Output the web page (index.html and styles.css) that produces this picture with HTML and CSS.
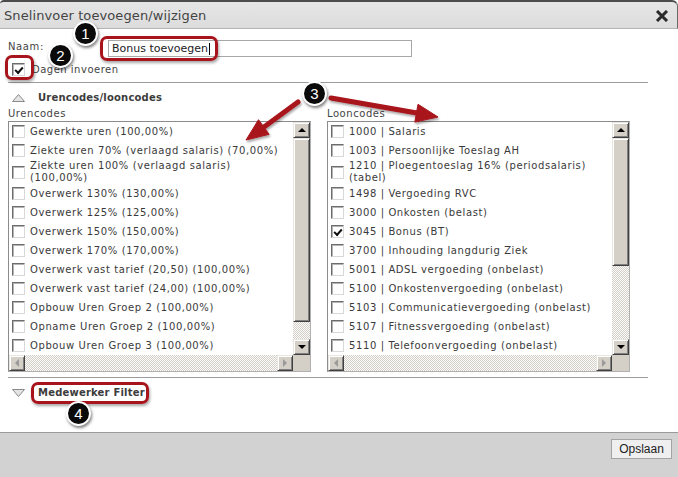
FILE: index.html
```html
<!DOCTYPE html>
<html lang="nl">
<head>
<meta charset="utf-8">
<title>Snelinvoer toevoegen/wijzigen</title>
<link rel="stylesheet" href="styles.css">
</head>
<body>
<div class="window">
  <div class="titlebar">
    <span class="title">Snelinvoer toevoegen/wijzigen</span>
    <svg class="close" width="14" height="12" viewBox="0 0 14 12"><path d="M2 1 L12 11 M12 1 L2 11" stroke="#2a2a2a" stroke-width="3"/></svg>
  </div>

  <div class="content">
    <div class="name-row">
      <label class="name-label">Naam:</label>
      <div class="name-input">Bonus toevoegen<span class="caret"></span></div>
    </div>
    <div class="check-row">
      <span class="cb checked"></span>
      <span class="check-label">Dagen invoeren</span>
    </div>
    <div class="rule"></div>

    <div class="section-head">
      <svg class="tri" width="13" height="8" viewBox="0 0 13 8"><polygon points="6.5,0.5 12.5,7.5 0.5,7.5" fill="#e4e4e4" stroke="#8a8a8a"/></svg>
      <span>Urencodes/looncodes</span>
    </div>

    <div class="columns">
      <div class="column">
        <div class="col-label">Urencodes</div>
        <div class="listbox">
          <div class="listbox-main">
            <ul class="items">
              <li><span class="cb"></span><span class="txt">Gewerkte uren (100,00%)</span></li>
              <li><span class="cb"></span><span class="txt">Ziekte uren 70% (verlaagd salaris) (70,00%)</span></li>
              <li><span class="cb"></span><span class="txt">Ziekte uren 100% (verlaagd salaris)<br>(100,00%)</span></li>
              <li><span class="cb"></span><span class="txt">Overwerk 130% (130,00%)</span></li>
              <li><span class="cb"></span><span class="txt">Overwerk 125% (125,00%)</span></li>
              <li><span class="cb"></span><span class="txt">Overwerk 150% (150,00%)</span></li>
              <li><span class="cb"></span><span class="txt">Overwerk 170% (170,00%)</span></li>
              <li><span class="cb"></span><span class="txt">Overwerk vast tarief (20,50) (100,00%)</span></li>
              <li><span class="cb"></span><span class="txt">Overwerk vast tarief (24,00) (100,00%)</span></li>
              <li><span class="cb"></span><span class="txt">Opbouw Uren Groep 2 (100,00%)</span></li>
              <li><span class="cb"></span><span class="txt">Opname Uren Groep 2 (100,00%)</span></li>
              <li><span class="cb"></span><span class="txt">Opbouw Uren Groep 3 (100,00%)</span></li>
            </ul>
            <div class="vscroll">
              <div class="sbtn"><span class="arr up"></span></div>
              <div class="thumb thumb-left"></div>
              <div class="track"></div>
              <div class="sbtn"><span class="arr down"></span></div>
            </div>
          </div>
          <div class="hscroll">
            <div class="sbtn"><span class="arr left"></span></div>
            <div class="track"></div>
            <div class="sbtn"><span class="arr right"></span></div>
            <div class="corner"></div>
          </div>
        </div>
      </div>

      <div class="column">
        <div class="col-label">Looncodes</div>
        <div class="listbox">
          <div class="listbox-main">
            <ul class="items">
              <li><span class="cb"></span><span class="txt">1000 | Salaris</span></li>
              <li><span class="cb"></span><span class="txt">1003 | Persoonlijke Toeslag AH</span></li>
              <li><span class="cb"></span><span class="txt">1210 | Ploegentoeslag 16% (periodsalaris)<br>(tabel)</span></li>
              <li><span class="cb"></span><span class="txt">1498 | Vergoeding RVC</span></li>
              <li><span class="cb"></span><span class="txt">3000 | Onkosten (belast)</span></li>
              <li><span class="cb checked"></span><span class="txt">3045 | Bonus (BT)</span></li>
              <li><span class="cb"></span><span class="txt">3700 | Inhouding langdurig Ziek</span></li>
              <li><span class="cb"></span><span class="txt">5001 | ADSL vergoeding (onbelast)</span></li>
              <li><span class="cb"></span><span class="txt">5100 | Onkostenvergoeding (onbelast)</span></li>
              <li><span class="cb"></span><span class="txt">5103 | Communicatievergoeding (onbelast)</span></li>
              <li><span class="cb"></span><span class="txt">5107 | Fitnessvergoeding (onbelast)</span></li>
              <li><span class="cb"></span><span class="txt">5110 | Telefoonvergoeding (onbelast)</span></li>
            </ul>
            <div class="vscroll">
              <div class="sbtn"><span class="arr up"></span></div>
              <div class="thumb thumb-right"></div>
              <div class="track"></div>
              <div class="sbtn"><span class="arr down"></span></div>
            </div>
          </div>
          <div class="hscroll">
            <div class="sbtn"><span class="arr left"></span></div>
            <div class="track"></div>
            <div class="sbtn"><span class="arr right"></span></div>
            <div class="corner"></div>
          </div>
        </div>
      </div>
    </div>

    <div class="rule rule-low"></div>

    <div class="section-head">
      <svg class="tri" width="13" height="8" viewBox="0 0 13 8"><polygon points="0.5,0.5 12.5,0.5 6.5,7.5" fill="#e4e4e4" stroke="#8a8a8a"/></svg>
      <span>Medewerker Filter</span>
    </div>
  </div>

  <div class="footer">
    <button class="btn">Opslaan</button>
  </div>

  <!-- annotations -->
  <div class="mark mark-1"></div>
  <div class="mark mark-2"></div>
  <div class="mark mark-3"></div>

  <svg class="arrows" width="678" height="477" viewBox="0 0 678 477">
    <defs>
      <filter id="sh" x="-20%" y="-20%" width="140%" height="140%">
        <feDropShadow dx="1" dy="2" stdDeviation="1.2" flood-color="#000" flood-opacity="0.35"/>
      </filter>
    </defs>
    <g filter="url(#sh)" fill="#a8141c" stroke="#a8141c">
      <line x1="298" y1="102" x2="264" y2="127" stroke-width="5" stroke-linecap="round"/>
      <polygon points="246,140 269.1,134.3 258.5,119.7" stroke-width="1" stroke-linejoin="round"/>
      <line x1="331" y1="98" x2="417" y2="113" stroke-width="5" stroke-linecap="round"/>
      <polygon points="438,117 414.8,122.1 418,104.3" stroke-width="1" stroke-linejoin="round"/>
    </g>
  </svg>

  <div class="badge badge-1">1</div>
  <div class="badge badge-2">2</div>
  <div class="badge badge-3">3</div>
  <div class="badge badge-4">4</div>
</div>
</body>
</html>
```

FILE: styles.css
```css
* { box-sizing: border-box; }

html, body {
  margin: 0;
  padding: 0;
  background: #fff;
}

body {
  font-family: "DejaVu Sans", Verdana, sans-serif;
  font-size: 10px;
  color: #333;
}

.window {
  position: relative;
  width: 678px;
  height: 477px;
  display: flex;
  flex-direction: column;
  overflow: hidden;
  background: #fff;
}

/* title bar */
.titlebar {
  height: 29px;
  flex: none;
  display: flex;
  align-items: center;
  justify-content: space-between;
  padding: 1px 8px 0 4px;
  background: linear-gradient(#e6e6e6, #dcdcdc);
  border-top: 2px solid #4c4c4c;
  border-right: 1px solid #6a6a6a;
  border-bottom: 1px solid #b4b4b4;
  border-radius: 4px 6px 0 0;
}

.title {
  font-size: 13px;
  color: #444;
  letter-spacing: 0.1px;
}

.close { display: block; margin-top: 1px; }

/* content */
.content {
  flex: 1;
  padding: 11px 30px 0 8px;
}

.name-row {
  display: flex;
  height: 17px;
}

.name-label {
  width: 100px;
  padding-top: 1px;
  line-height: 12px;
  letter-spacing: 0.6px;
  color: #444;
}

.name-input {
  width: 304px;
  height: 17px;
  border: 1px solid #a8a8a8;
  padding: 0 3px;
  font-size: 11px;
  line-height: 15px;
  color: #222;
  display: flex;
  align-items: center;
}

.caret {
  display: inline-block;
  width: 1px;
  height: 12px;
  background: #000;
  margin-left: 1px;
}

.check-row {
  display: flex;
  align-items: center;
  height: 14px;
  margin-top: 5px;
  padding-left: 4px;
}

.check-label {
  margin-left: 7px;
  letter-spacing: 0.5px;
  color: #444;
}

.rule {
  height: 1px;
  background: #9c9c9c;
  margin-top: 6px;
}

.rule-low { margin-top: 5px; }

.section-head {
  display: flex;
  align-items: center;
  height: 12px;
  margin-top: 9px;
  padding-left: 4px;
  font-weight: bold;
  color: #3c3c3c;
  line-height: 12px;
  letter-spacing: 0.2px;
}

.section-head .tri {
  display: block;
  margin-right: 13px;
}

/* lists */
.columns {
  display: flex;
  gap: 16px;
  margin-top: 4px;
}

.column { width: 303px; }

.col-label {
  line-height: 12px;
  height: 13px;
  color: #444;
  letter-spacing: 0.55px;
}

.listbox {
  width: 303px;
  height: 251px;
  border: 1px solid #8c8c8c;
  border-right-color: #b0b0b0;
  border-bottom-color: #b0b0b0;
  display: flex;
  flex-direction: column;
}

.listbox-main {
  display: flex;
  height: 233px;
}

.items {
  flex: 1;
  list-style: none;
  margin: 0;
  padding: 0;
  overflow: hidden;
}

.items li {
  display: flex;
  align-items: center;
  min-height: 19px;
  white-space: nowrap;
}

.items .cb { margin: 0 5px 0 3px; }

.txt {
  line-height: 12px;
  color: #3a3a3a;
  letter-spacing: 0.6px;
}

/* checkbox */
.cb {
  flex: none;
  width: 13px;
  height: 13px;
  background: #fff;
  border: 1px solid;
  border-color: #6c6c6c #d8d8d8 #d8d8d8 #6c6c6c;
  box-shadow: inset 1px 1px 0 #b4b4b4;
  position: relative;
}

.cb.checked::after {
  content: "";
  position: absolute;
  left: 2px;
  top: 1px;
  width: 6px;
  height: 3px;
  border-left: 2px solid #111;
  border-bottom: 2px solid #111;
  transform: translate(0, 2px) rotate(-48deg);
}

/* scrollbars */
.vscroll {
  width: 17px;
  flex: none;
  display: flex;
  flex-direction: column;
}

.sbtn {
  flex: none;
  width: 17px;
  height: 16px;
  background: #d4d0c8;
  border: 1px solid;
  border-color: #e8e6e0 #404040 #404040 #e8e6e0;
  box-shadow: inset 1px 1px 0 #fff, inset -1px -1px 0 #808080;
  display: flex;
  align-items: center;
  justify-content: center;
}

.thumb {
  flex: none;
  background: #d4d0c8;
  border: 1px solid;
  border-color: #e8e6e0 #404040 #404040 #e8e6e0;
  box-shadow: inset 1px 1px 0 #fff, inset -1px -1px 0 #808080;
}

.thumb-left { height: 184px; }
.thumb-right { height: 128px; }

.track {
  flex: 1;
  background: repeating-conic-gradient(#d4d0c8 0 25%, #fbfbfb 0 50%) 0 0 / 2px 2px;
}

.hscroll {
  display: flex;
  height: 16px;
}

.hscroll .sbtn { height: 16px; width: 16px; }

.corner {
  width: 17px;
  background: #d4d0c8;
}

.arr {
  width: 0;
  height: 0;
  border: 4px solid transparent;
}

.arr.up { border-bottom-color: #000; border-top-width: 0; margin-top: -1px; }
.arr.down { border-top-color: #000; border-bottom-width: 0; }
.arr.left { border-right-color: #9a9a9a; border-left-width: 0; }
.arr.right { border-left-color: #9a9a9a; border-right-width: 0; }

/* footer */
.footer {
  flex: none;
  height: 45px;
  border-top: 1px solid #9a9a9a;
  background: #d2d2d2;
  display: flex;
  justify-content: flex-end;
  align-items: flex-start;
  padding: 6px 6px 0 0;
}

.btn {
  width: 61px;
  height: 20px;
  padding: 0;
  background: #efefef;
  border: 1px solid #a4a4a4;
  font-family: "Liberation Sans", Arial, sans-serif;
  font-size: 12px;
  color: #222;
}

/* annotations */
.mark {
  position: absolute;
  border: 3px solid #a8141c;
  border-radius: 7px;
  box-shadow: 1px 2px 3px rgba(0, 0, 0, 0.35);
}

.mark-1 { left: 100px; top: 36px; width: 118px; height: 25px; }
.mark-2 { left: 5px; top: 55px; width: 29px; height: 25px; }
.mark-3 { left: 31px; top: 382px; width: 118px; height: 22px; }

.arrows {
  position: absolute;
  left: 0;
  top: 0;
  pointer-events: none;
}

.badge {
  position: absolute;
  width: 25px;
  height: 25px;
  border-radius: 50%;
  background: #0a0a0a;
  border: 2px solid #fff;
  box-shadow: 1px 2px 3px rgba(0, 0, 0, 0.5);
  color: #fff;
  font-family: "Liberation Sans", Arial, sans-serif;
  font-size: 15px;
  line-height: 21px;
  text-align: center;
}

.badge-1 { left: 73px; top: 21px; }
.badge-2 { left: 48px; top: 43px; }
.badge-3 { left: 302px; top: 81px; }
.badge-4 { left: 66px; top: 401px; }
```
